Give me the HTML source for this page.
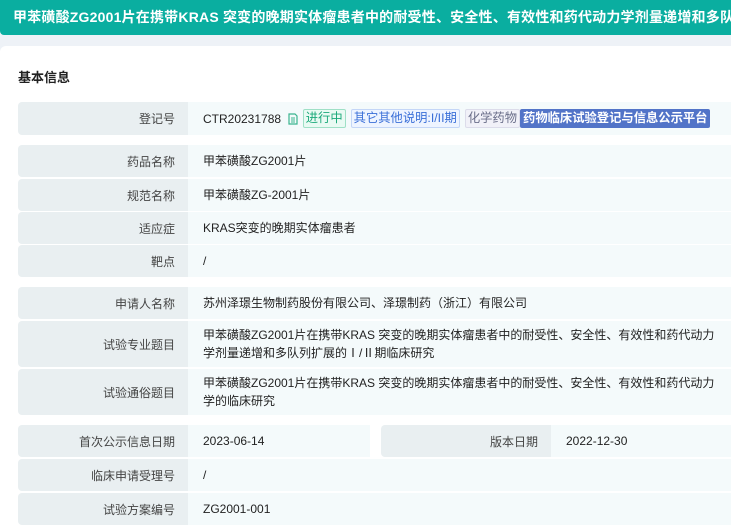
<!DOCTYPE html>
<html><head><meta charset="utf-8"><style>
*{margin:0;padding:0;box-sizing:border-box}
html,body{width:731px;height:527px;overflow:hidden}
body{background:#eef2f7;font-family:"Liberation Sans","Noto Sans CJK SC",sans-serif;font-size:12px;color:#333;position:relative}
.hd{position:absolute;left:0;top:0;width:740px;height:35px;background:#0aaea0;border-radius:0 0 4px 4px;color:#fff;font-weight:bold;font-size:14px;letter-spacing:0.2px;line-height:35px;padding-left:13px;white-space:nowrap;overflow:hidden}
.card{position:absolute;left:0;top:46px;width:740px;height:500px;background:#fff;border-radius:6px 0 0 0}
.sec{position:absolute;left:18px;top:67px;font-weight:bold;font-size:13px;color:#222}
.r{position:absolute;left:18px;width:713px;display:flex}
.l{width:170px;background:#e9eff1;border-radius:4px 0 0 4px;text-align:right;padding-right:13px;display:flex;align-items:center;justify-content:flex-end;color:#444}
.v{flex:1;background:#f4fafb;padding-left:15px;display:flex;align-items:center;line-height:18px;color:#222;white-space:nowrap}
.tag{display:inline-block;height:19px;line-height:17px;border:1px solid;border-radius:2px;padding:0 2px;margin-right:5px;font-size:12.3px}
</style></head><body>
<div class="hd">甲苯磺酸ZG2001片在携带KRAS 突变的晚期实体瘤患者中的耐受性、安全性、有效性和药代动力学剂量递增和多队列扩展的Ⅰ/Ⅱ期临床研究</div>
<div class="card"></div>
<div class="sec">基本信息</div>
<div class="r" style="top:102px;height:33px"><div class="l">登记号</div><div class="v">CTR20231788&nbsp;&nbsp;<svg width="10" height="12" viewBox="0 0 10 12" style="margin-right:5px"><path d="M1 1h6l2 2v8H1z" fill="none" stroke="#3bb58f" stroke-width="1.2"/><path d="M3 5h4M3 7h4M3 9h4" stroke="#3bb58f"/></svg><span class="tag" style="color:#1aa97a;border-color:#9fe0c6;background:#e9faf3">进行中</span><span class="tag" style="color:#3a6fd8;border-color:#c4d6f7;background:#eef4ff">其它其他说明:I/II期</span><span class="tag" style="color:#6b6f8a;border-color:#dcdcea;background:#f1f1f8;margin-right:0">化学药物</span><span class="tag" style="color:#fff;border-color:#5274c8;background:#5274c8;font-weight:bold">药物临床试验登记与信息公示平台</span></div></div>
<div class="r" style="top:145px;height:32px"><div class="l">药品名称</div><div class="v">甲苯磺酸ZG2001片</div></div>
<div class="r" style="top:179px;height:32px"><div class="l">规范名称</div><div class="v">甲苯磺酸ZG-2001片</div></div>
<div class="r" style="top:212px;height:32px"><div class="l">适应症</div><div class="v">KRAS突变的晚期实体瘤患者</div></div>
<div class="r" style="top:245px;height:32px"><div class="l">靶点</div><div class="v">/</div></div>
<div class="r" style="top:287px;height:32px"><div class="l">申请人名称</div><div class="v">苏州泽璟生物制药股份有限公司、泽璟制药（浙江）有限公司</div></div>
<div class="r" style="top:321px;height:46px"><div class="l">试验专业题目</div><div class="v" style="white-space:normal;padding-right:10px">甲苯磺酸ZG2001片在携带KRAS 突变的晚期实体瘤患者中的耐受性、安全性、有效性和药代动力学剂量递增和多队列扩展的Ⅰ/Ⅱ期临床研究</div></div>
<div class="r" style="top:369px;height:46px"><div class="l">试验通俗题目</div><div class="v" style="white-space:normal;padding-right:10px">甲苯磺酸ZG2001片在携带KRAS 突变的晚期实体瘤患者中的耐受性、安全性、有效性和药代动力学的临床研究</div></div>
<div class="r" style="top:425px;height:32px;width:352px"><div class="l">首次公示信息日期</div><div class="v">2023-06-14</div></div>
<div class="r" style="top:425px;height:32px;left:381px;width:350px"><div class="l">版本日期</div><div class="v">2022-12-30</div></div>
<div class="r" style="top:459px;height:32px"><div class="l">临床申请受理号</div><div class="v">/</div></div>
<div class="r" style="top:493px;height:32px"><div class="l">试验方案编号</div><div class="v">ZG2001-001</div></div>
</body></html>
